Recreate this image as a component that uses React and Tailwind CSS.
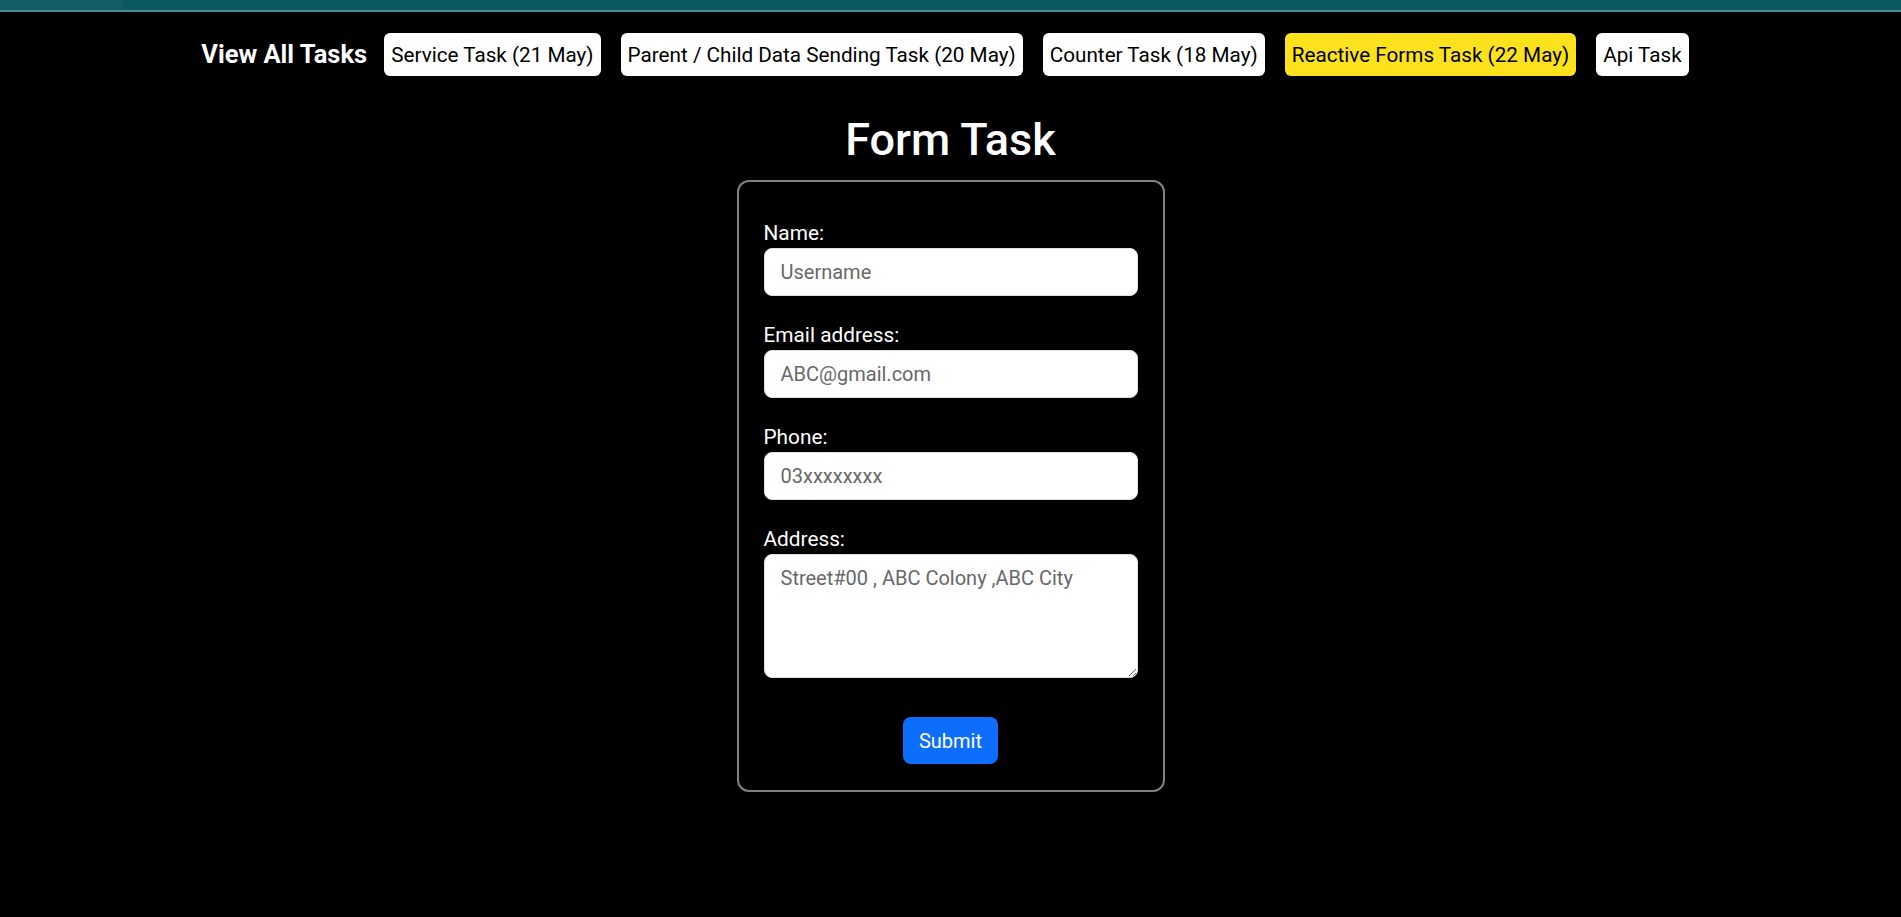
import { useState } from 'react';

const tasks = [
  { label: 'Service Task (21 May)' },
  { label: 'Parent / Child Data Sending Task (20 May)' },
  { label: 'Counter Task (18 May)' },
  { label: 'Reactive Forms Task (22 May)', active: true },
  { label: 'Api Task' },
];

const fields = [
  { id: 'name', label: 'Name:', placeholder: 'Username', type: 'text' },
  { id: 'email', label: 'Email address:', placeholder: 'ABC@gmail.com', type: 'email' },
  { id: 'phone', label: 'Phone:', placeholder: '03xxxxxxxx', type: 'text' },
];

const App = () => {
  const [form, setForm] = useState({ name: '', email: '', phone: '', address: '' });

  const update = (key) => (e) => setForm({ ...form, [key]: e.target.value });

  return (
    <div className="min-h-screen bg-black font-['Roboto','Liberation_Sans',sans-serif]">
      {/* window strip */}
      <div className="flex h-[10px]">
        <div className="w-[123px] bg-[#125d66]" />
        <div className="flex-1 bg-[#0b5961]" />
      </div>
      <div className="h-[2px] bg-[#4a8b93]" />

      <nav className="mt-[21px] flex items-center justify-center pr-[11px]">
        <span className="mr-[17px] text-[25.5px] font-bold leading-none text-white">
          View All Tasks
        </span>
        <div className="flex items-center gap-5">
          {tasks.map((task) => (
            <button
              key={task.label}
              className={`flex h-[43px] items-center rounded-md px-[7px] text-[20.7px] leading-[30px] text-black ${
                task.active ? 'bg-[#fbe21c]' : 'bg-white'
              }`}
            >
              {task.label}
            </button>
          ))}
        </div>
      </nav>

      <h1 className="mt-[37px] mb-[13px] text-center text-[45px] font-medium leading-[54px] text-white">
        Form Task
      </h1>

      <form
        onSubmit={(e) => e.preventDefault()}
        className="mx-auto w-[428px] rounded-xl border-2 border-[#808080] px-[25px] pt-[36px] pb-[26px]"
      >
        {fields.map((field) => (
          <div key={field.id} className="mb-6">
            <label htmlFor={field.id} className="block text-[20.8px] leading-[30px] text-white">
              {field.label}
            </label>
            <input
              id={field.id}
              type={field.type}
              value={form[field.id]}
              onChange={update(field.id)}
              placeholder={field.placeholder}
              className="block h-[48px] w-full rounded-lg border border-[#dee2e6] bg-white px-4 text-[20px] leading-[30px] text-[#212529] outline-none placeholder:text-[#686868]"
            />
          </div>
        ))}

        <div>
          <label htmlFor="address" className="block text-[20.8px] leading-[30px] text-white">
            Address:
          </label>
          <textarea
            id="address"
            value={form.address}
            onChange={update('address')}
            placeholder="Street#00 , ABC Colony ,ABC City"
            className="block h-[124px] w-full rounded-lg border border-[#dee2e6] bg-white px-4 py-2 text-[20px] leading-[30px] text-[#212529] outline-none placeholder:text-[#686868]"
          />
        </div>

        <div className="mt-[39px] flex justify-center">
          <button
            type="submit"
            className="h-[47px] rounded-lg bg-[#0d6efd] px-4 text-[20px] leading-[30px] text-white"
          >
            Submit
          </button>
        </div>
      </form>
    </div>
  );
};

export default App;
